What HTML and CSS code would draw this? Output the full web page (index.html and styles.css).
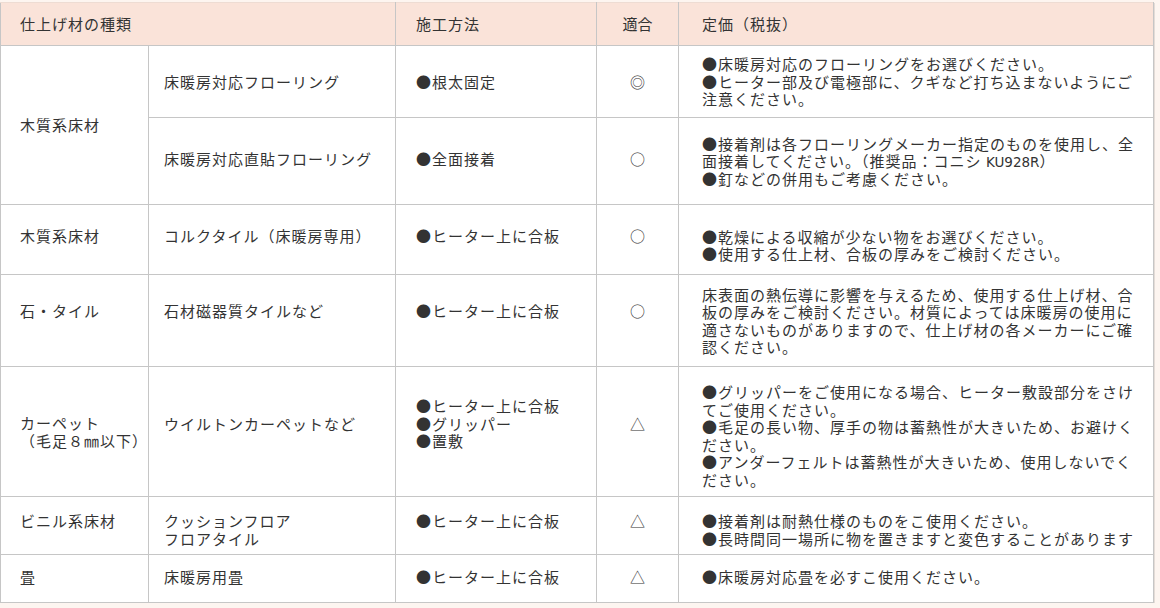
FILE: index.html
```html
<!DOCTYPE html>
<html lang="ja">
<head>
<meta charset="utf-8">
<title>床暖房 仕上げ材</title>
<link rel="stylesheet" href="styles.css">
</head>
<body>
<table class="spec">
  <colgroup>
    <col class="w-cat">
    <col class="w-item">
    <col class="w-method">
    <col class="w-fit">
    <col class="w-note">
  </colgroup>
  <thead>
    <tr class="r-head">
      <th class="c-cat" colspan="2">仕上げ材の種類</th>
      <th class="c-method">施工方法</th>
      <th class="c-fit">適合</th>
      <th class="c-note">定価（税抜）</th>
    </tr>
  </thead>
  <tbody>
    <tr class="r1">
      <td class="c-cat" rowspan="2">木質系床材</td>
      <td class="c-item">床暖房対応フローリング</td>
      <td class="c-method">●根太固定</td>
      <td class="c-fit">◎</td>
      <td class="c-note">●床暖房対応のフローリングをお選びください。<br>●ヒーター部及び電極部に、クギなど打ち込まないようにご<br>注意ください。</td>
    </tr>
    <tr class="r2">
      <td class="c-item up-2">床暖房対応直貼フローリング</td>
      <td class="c-method up-2">●全面接着</td>
      <td class="c-fit up-2">○</td>
      <td class="c-note">●接着剤は各フローリングメーカー指定のものを使用し、全<br>面接着してください。（推奨品：コニシ <span class="latin">KU928R</span>）<br>●釘などの併用もご考慮ください。</td>
    </tr>
    <tr class="r3">
      <td class="c-cat up-4">木質系床材</td>
      <td class="c-item up-4">コルクタイル（床暖房専用）</td>
      <td class="c-method up-4">●ヒーター上に合板</td>
      <td class="c-fit up-4">○</td>
      <td class="c-note down-5">●乾燥による収縮が少ない物をお選びください。<br>●使用する仕上材、合板の厚みをご検討ください。</td>
    </tr>
    <tr class="r4">
      <td class="c-cat up-10">石・タイル</td>
      <td class="c-item up-10">石材磁器質タイルなど</td>
      <td class="c-method up-10">●ヒーター上に合板</td>
      <td class="c-fit up-10">○</td>
      <td class="c-note">床表面の熱伝導に影響を与えるため、使用する仕上げ材、合<br>板の厚みをご検討ください。材質によっては床暖房の使用に<br>適さないものがありますので、仕上げ材の各メーカーにご確<br>認ください。</td>
    </tr>
    <tr class="r5">
      <td class="c-cat">カーペット<br>（毛足８㎜以下）</td>
      <td class="c-item up-8">ウイルトンカーペットなど</td>
      <td class="c-method up-8">●ヒーター上に合板<br>●グリッパー<br>●置敷</td>
      <td class="c-fit up-8">△</td>
      <td class="c-note down-4">●グリッパーをご使用になる場合、ヒーター敷設部分をさけ<br>てご使用ください。<br>●毛足の長い物、厚手の物は蓄熱性が大きいため、お避けく<br>ださい。<br>●アンダーフェルトは蓄熱性が大きいため、使用しないでく<br>ださい。</td>
    </tr>
    <tr class="r6">
      <td class="c-cat up-5">ビニル系床材</td>
      <td class="c-item down-4">クッションフロア<br>フロアタイル</td>
      <td class="c-method up-5">●ヒーター上に合板</td>
      <td class="c-fit up-5">△</td>
      <td class="c-note down-4">●接着剤は耐熱仕様のものをこ使用ください。<br>●長時間同一場所に物を置きますと変色することがあります</td>
    </tr>
    <tr class="r7">
      <td class="c-cat up-2">畳</td>
      <td class="c-item up-2">床暖房用畳</td>
      <td class="c-method up-2">●ヒーター上に合板</td>
      <td class="c-fit up-2">△</td>
      <td class="c-note up-2">●床暖房対応畳を必すこ使用ください。</td>
    </tr>
  </tbody>
</table>
</body>
</html>
```

FILE: styles.css
```css
html, body {
  margin: 0;
  padding: 0;
  background: #fdf5f0;
}

body {
  padding-top: 2px;
  font-family: "Noto Sans CJK JP", "Noto Sans", sans-serif;
  font-size: 15px;
  letter-spacing: 1px;
  line-height: 17.5px;
  color: #333333;
}

.spec {
  width: 1153px;
  border-collapse: collapse;
  table-layout: fixed;
  background: #ffffff;
  border: 1px solid #bdbdbd;
  box-shadow: 1px 1px 0 #e4dcd7;
}

.w-cat { width: 148px; }
.w-item { width: 247px; }
.w-method { width: 201px; }
.w-fit { width: 82px; }
.w-note { width: 475px; }

.spec th,
.spec td {
  border: 1px solid #c6c6c6;
  padding: 0;
  vertical-align: middle;
  text-align: left;
  font-weight: normal;
  white-space: nowrap;
}

.spec thead th {
  background: #fae3d9;
  border-top-color: #eedcd3;
}

.latin {
  font-family: "DejaVu Sans", sans-serif;
  font-size: 13.5px;
  letter-spacing: 0;
  line-height: 0;
}

.r-head { height: 43px; }
.r1 { height: 72px; }
.r2 { height: 87px; }
.r3 { height: 70px; }
.r4 { height: 92px; }
.r5 { height: 130px; }
.r6 { height: 58px; }
.r7 { height: 48px; }

.c-cat { padding-left: 19px !important; }
.c-item { padding-left: 15px !important; }
.c-method { padding-left: 20px !important; }
.c-fit { text-align: center !important; letter-spacing: 0; }
.c-note { padding-left: 23px !important; }

.up-2 { padding-bottom: 4px !important; }
.up-4 { padding-bottom: 8px !important; }
.up-5 { padding-bottom: 10px !important; }
.up-8 { padding-bottom: 16px !important; }
.up-10 { padding-bottom: 20px !important; }
.down-4 { padding-top: 8px !important; }
.down-5 { padding-top: 11px !important; }
```
